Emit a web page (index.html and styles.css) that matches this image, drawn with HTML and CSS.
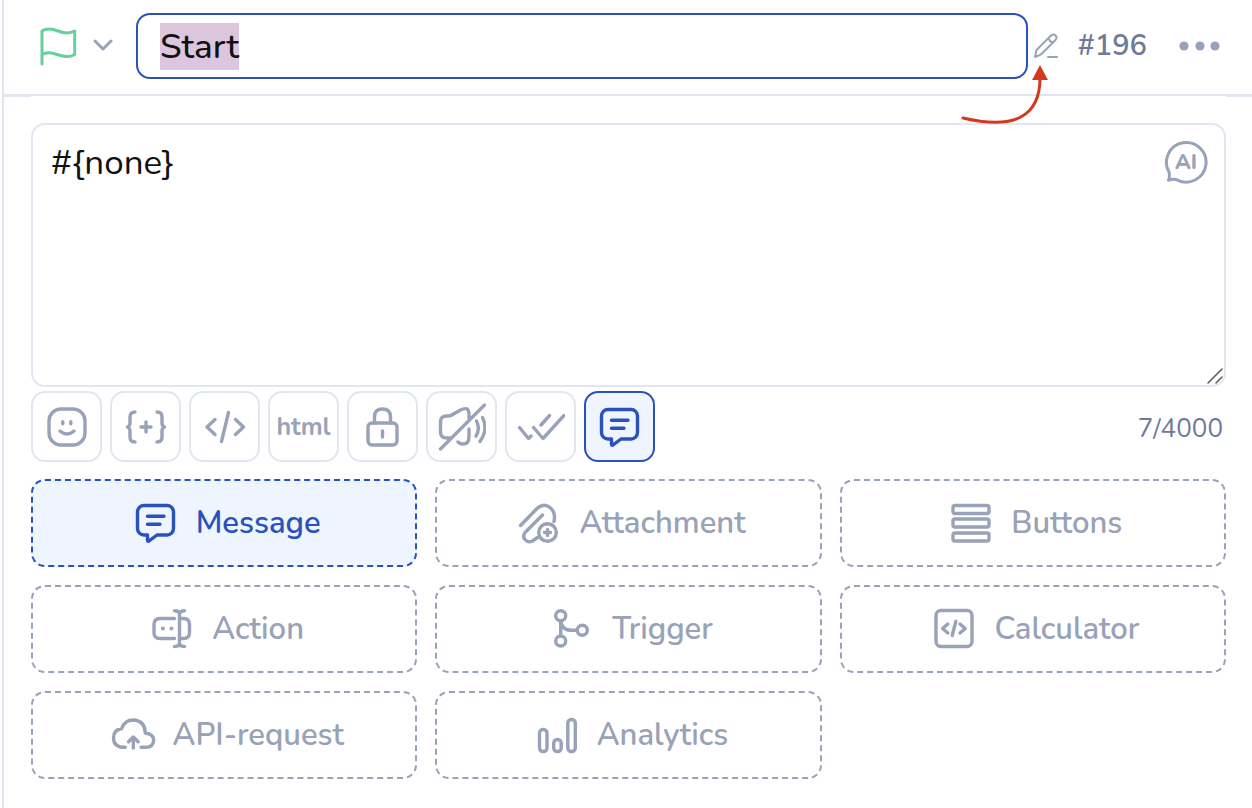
FILE: index.html
```html
<!DOCTYPE html>
<html lang="en">
  <head>
    <meta charset="utf-8" />
    <meta name="viewport" content="width=device-width,initial-scale=1" />
    <title>Start #196</title>
    <link rel="stylesheet" href="styles.css">
  </head>
  <body>
    <svg class="sprite" aria-hidden="true">
      <symbol id="i-message" viewBox="0 0 48 48">
        <path d="M25 36h10a6.500 6.500 0 0 0 6.500-6.500V13A6.500 6.500 0 0 0 35 6.500H12A6.500 6.500 0 0 0 5.500 13v16.500A6.500 6.500 0 0 0 12 36h3.500v5.500q.3 1.200 1.500.5z" />
        <path d="M15.500 17.300H32M15.500 25.300H28" />
      </symbol>
    </svg>

    <div class="editor">
      <header class="header">
        <button class="flag" type="button" aria-label="Block icon">
          <svg class="icon flag-icon" viewBox="0 0 48 48"><path d="M8 42V9c5-3.500 10-2.500 16 0s11 3 16.700 0v23.500c-5 3-9 3-16 .5S13 29.500 8 32.500" /></svg>
          <svg class="chevron" viewBox="0 0 20 14"><path d="M2 2l8 8 8-8" /></svg>
        </button>
        <input class="title" id="title" type="text" value="Start" aria-label="Block name" autofocus />
        <button class="edit" type="button" aria-label="Rename">
          <svg viewBox="0 0 26 26"><path d="M2 24l1.500-7L18 2.500q2.500-2 4.500 0t0 4.500L9 20.500q-2 2-7 3.500zM15.500 5q1 4 5 4.500M15 24h9" /></svg>
        </button>
        <span class="number">#196</span>
        <button class="more" type="button" aria-label="More">
          <svg viewBox="0 0 42 12"><circle cx="5" cy="6" r="4.600" /><circle cx="21" cy="6" r="4.600" /><circle cx="36" cy="6" r="4.600" /></svg>
        </button>
      </header>

      <main class="content">
        <div class="text-box">
          <textarea class="text" aria-label="Message text">#{none}</textarea>
          <button class="ai" type="button" aria-label="AI assistant">
            <svg viewBox="0 0 44 44">
              <path d="M5 32A19.800 19.800 0 1 1 13 39.800Q10 38.500 4.500 40.300 6 37 5 32z" />
              <text x="22" y="29" text-anchor="middle">AI</text>
            </svg>
          </button>
          <svg class="grip" viewBox="0 0 18 18" aria-hidden="true"><path d="M2 16L16 2M10 16l6-6" /></svg>
        </div>

        <div class="toolbar">
          <button class="tool" type="button" aria-label="Emoji">
            <svg class="icon" viewBox="0 0 48 48"><rect x="6" y="6" width="36" height="36" rx="12" /><path d="M19.800 18.800v2M27.800 18.800v2M17 28q7 6 14 0" /></svg>
          </button>
          <button class="tool" type="button" aria-label="Variable">
            <svg class="icon" viewBox="0 0 48 48"><path d="M13 9q-5 0-5 5v6q0 3-2.500 4Q8 25 8 28v6q0 5 5 5M35 9q5 0 5 5v6q0 3 2.500 4-2.500 1-2.500 4v6q0 5-5 5M24 19v10M19 24h10" /></svg>
          </button>
          <button class="tool" type="button" aria-label="Code">
            <svg class="icon" viewBox="0 0 48 48"><path d="M14 16.500L6 24l8 7.500M34.500 16.500l8 7.500-8 7.500M27.500 9.500l-7 29" /></svg>
          </button>
          <button class="tool" type="button">html</button>
          <button class="tool" type="button" aria-label="Protect">
            <svg class="icon" viewBox="0 0 48 48"><rect x="9" y="20" width="29" height="22" rx="4" /><path d="M15.500 20v-6q0-8 8-8t8 8v6M23.500 28v6" /></svg>
          </button>
          <button class="tool" type="button" aria-label="Silent">
            <svg class="icon" viewBox="0 0 48 48"><path d="M12 35H9q-6.500 0-6.500-6V19q0-6 6-6h2q2 0 5-2l7-4q8-4 8.500 3.500V16M31 26v8q0 7-6 7-3 0-5-2M46.500 2L2.500 46M38.500 18q4 8-.5 15M44.500 14.500q6 12-2.500 24" /></svg>
          </button>
          <button class="tool" type="button" aria-label="Read">
            <svg class="icon" viewBox="0 0 48 48"><path d="M2.500 24.500l9 11 2.500-2.500M24 22l8.500-9.500M16.500 24.500l9.500 11 21-23" /></svg>
          </button>
          <button class="tool active" type="button" aria-label="Message">
            <svg class="icon"><use href="#i-message" /></svg>
          </button>
          <span class="counter">7/4000</span>
        </div>

        <div class="cards">
          <button class="card active" type="button">
            <svg class="icon"><use href="#i-message" /></svg>
            Message
          </button>
          <button class="card" type="button">
            <svg class="icon" viewBox="0 0 48 48"><path d="M5.500 26.500L22 9.500q7-6 13-1t4 14M27.500 16L10.500 33q-3.500 4-.5 7.500t7.500 1.500l5-3.500" /><circle cx="32.500" cy="33.500" r="8.800" /><path d="M32.500 30.500v6M29.500 33.500h6" /></svg>
            Attachment
          </button>
          <button class="card" type="button">
            <svg class="icon" viewBox="0 0 48 48"><rect x="6" y="6.500" width="36" height="8" rx="2" /><rect x="6" y="20" width="36" height="8" rx="2" /><rect x="6" y="34" width="36" height="8" rx="2" /></svg>
            Buttons
          </button>
          <button class="card" type="button">
            <svg class="icon" viewBox="0 0 48 48"><path d="M26.500 13.500H12q-6 0-6 6v8q0 6 6 6h14.500M31.500 13.500h4q6 0 6 6v8q0 6-6 6h-4M31.500 9v30M26.500 5.800q5 0 5 3.500 0-3.500 5-3.500M26.500 41.500q5 0 5-3.500 0 3.500 5 3.500" /><path class="dots" d="M14.800 23.500h.1M23.400 23.500h.1" /></svg>
            Action
          </button>
          <button class="card" type="button">
            <svg class="icon" viewBox="0 0 48 48"><circle cx="12.700" cy="10.700" r="5" /><circle cx="12.700" cy="36" r="5" /><circle cx="34.300" cy="25.300" r="5" /><path d="M12.700 16v15M12.700 16q1 9.300 11 9.300h5" /></svg>
            Trigger
          </button>
          <button class="card" type="button">
            <svg class="icon" viewBox="0 0 48 48"><rect x="6" y="5.500" width="36" height="36" rx="5" /><path d="M17.800 19l-5.300 4.500 5.300 4.500M30 19l5.300 4.500L30 28M25.800 16.500l-3.600 14" /></svg>
            Calculator
          </button>
          <button class="card" type="button">
            <svg class="icon" viewBox="0 0 48 48"><path d="M16.300 36.300H14q-9.500-.5-9.500-9.500 0-8 8.200-9.300 3-8.500 11.600-8.500 11.500.5 12 13 8.400 1 8.400 7.500-.7 6.800-7.700 6.800h-5M24.300 37V26.500M19.500 30.700l4.800-4.700 4.800 4.700" /></svg>
            API-request
          </button>
          <button class="card" type="button">
            <svg class="icon" viewBox="0 0 48 48"><rect x="6.500" y="18.500" width="7.500" height="22" rx="3.500" /><rect x="20.700" y="28.500" width="7.500" height="12" rx="3.500" /><rect x="34.800" y="8.500" width="7.500" height="32" rx="3.500" /></svg>
            Analytics
          </button>
        </div>
      </main>

      <svg class="pointer" viewBox="0 0 90 62" aria-hidden="true">
        <path class="pointer-line" d="M3 54Q80 72 80 14" />
        <path class="pointer-head" d="M80 1l8 15H72z" />
      </svg>
    </div>

    <script>
      // name is ready to be overwritten as soon as the editor opens
      var title = document.getElementById("title");
      title.focus();
      title.select();
    </script>
  </body>
</html>
```
FILE: styles.css
```css
* {
  box-sizing: border-box;
}

body {
  margin: 0;
  background: #fff;
  font-family: Nunito, "Open Sans", "Noto Sans", sans-serif;
  color: #98a2b8;
}

button {
  padding: 0;
  border: 0;
  background: none;
  font-family: inherit;
  color: inherit;
  cursor: pointer;
}

svg {
  display: block;
  flex-shrink: 0;
  fill: none;
  stroke: currentColor;
  stroke-width: 3;
  stroke-linecap: round;
  stroke-linejoin: round;
}

.sprite {
  position: absolute;
  width: 0;
  height: 0;
}

.icon {
  width: 48px;
  height: 48px;
  stroke-width: 3.4;
}

.editor {
  position: relative;
  min-height: 100vh;
  margin-left: 2px;
  border-left: 2px solid #e2e6f0;
}

.header {
  display: flex;
  align-items: center;
  padding: 13px 31px 15px 30px;
  border-bottom: 3px solid #e2e6f0;
}

.flag {
  display: flex;
  align-items: center;
  gap: 11px;
  margin-right: 23px;
}

.flag-icon {
  color: #68d09c;
  stroke-width: 3;
}

.chevron {
  width: 20px;
  height: 14px;
}

.title {
  flex: 1;
  min-width: 0;
  height: 66px;
  padding: 0 22px;
  border: 2px solid #2a52be;
  border-radius: 14px;
  outline: none;
  font-family: inherit;
  font-size: 35px;
  font-weight: 500;
  line-height: 48px;
  color: #111;
  caret-color: transparent;
}

.title::selection {
  background: #dcc6de;
  color: #111;
}

.edit {
  margin: 0 18px 0 5px;
}

.edit svg {
  width: 26px;
  height: 26px;
  stroke-width: 2;
}

.number {
  margin-right: 32px;
  font-size: 29px;
  font-weight: 600;
  line-height: 40px;
  color: #6e7b98;
}

.more svg {
  width: 42px;
  height: 12px;
  fill: currentColor;
  stroke: none;
}

/* arrow to the rename button */
.pointer {
  position: absolute;
  top: 64px;
  right: 202px;
  width: 90px;
  height: 62px;
  color: #d23a20;
  pointer-events: none;
}

.pointer-head {
  fill: currentColor;
  stroke: none;
}

/* covers the lower edge of the header line */
.content {
  margin: -1px 26px 0 27px;
  padding-top: 27px;
  background: #fff;
}

.text-box {
  position: relative;
}

.text {
  display: block;
  width: 100%;
  height: 264px;
  padding: 14px 72px 14px 18px;
  border: 2px solid #e2e6f0;
  border-radius: 14px;
  outline: none;
  resize: none;
  font-family: inherit;
  font-size: 35px;
  line-height: 48px;
  color: #111;
}

.ai {
  position: absolute;
  top: 17px;
  right: 18px;
}

.ai svg {
  width: 44px;
  height: 44px;
}

.ai text {
  font-size: 21px;
  font-weight: 800;
  fill: currentColor;
  stroke: none;
}

.grip {
  position: absolute;
  right: 2px;
  bottom: 2px;
  width: 18px;
  height: 18px;
  color: #555;
  stroke-width: 1.5;
}

.toolbar {
  display: flex;
  align-items: center;
  gap: 8px;
  margin-top: 4px;
}

.tool {
  display: flex;
  align-items: center;
  justify-content: center;
  width: 71px;
  height: 71px;
  border: 2px solid #e2e6f0;
  border-radius: 14px;
  font-size: 25px;
  font-weight: 700;
}

.counter {
  margin: 4px 3px 0 auto;
  font-size: 26px;
  font-weight: 400;
  color: #6e7b98;
}

.cards {
  display: grid;
  grid-template-columns: repeat(3, 1fr);
  gap: 18px;
  margin-top: 17px;
}

.card {
  display: flex;
  align-items: center;
  justify-content: center;
  gap: 16px;
  height: 88px;
  padding-left: 4px;
  border: 2px dashed #98a2b8;
  border-radius: 14px;
  font-size: 31px;
  font-weight: 600;
}

.icon .dots {
  stroke-width: 4;
}

.active {
  border-color: #2a52be;
  background: #eef5fe;
  color: #2a52be;
}
```
